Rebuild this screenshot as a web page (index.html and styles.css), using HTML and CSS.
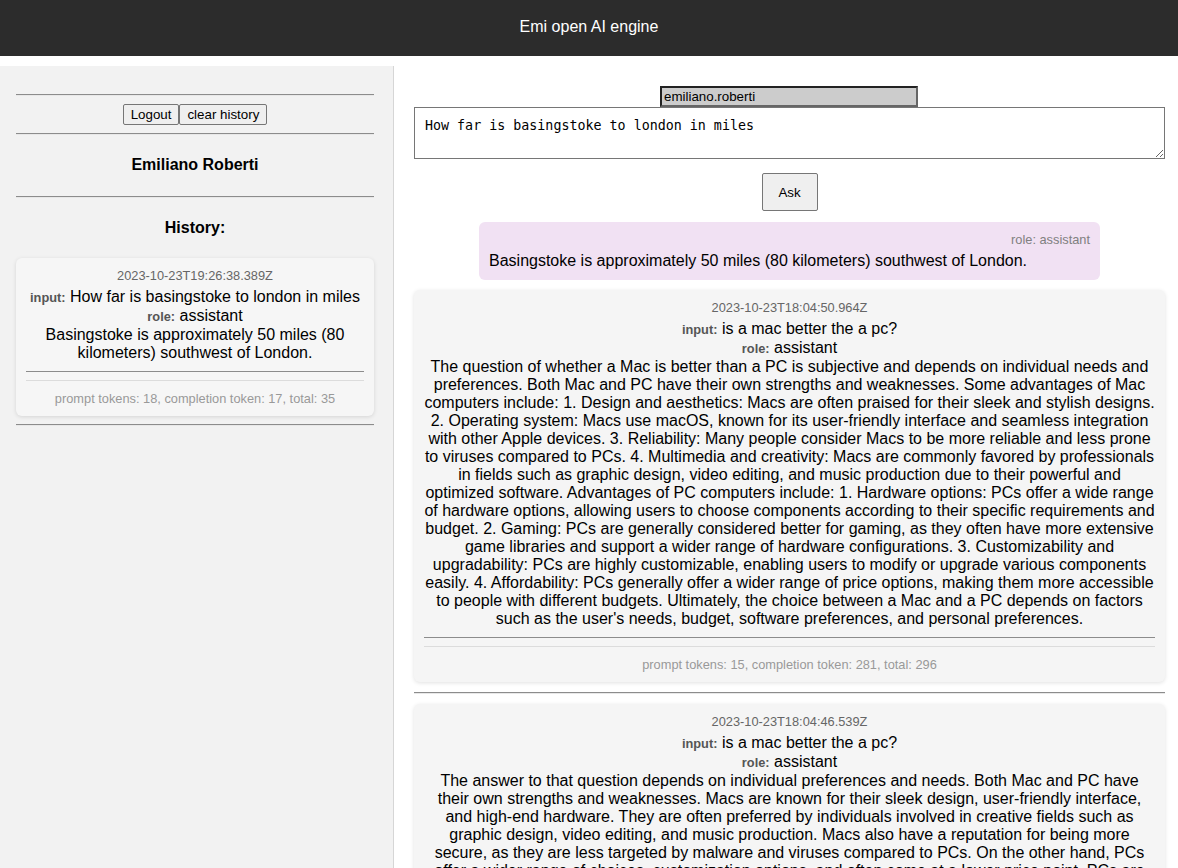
FILE: index.html
```html
<!DOCTYPE html>
<html lang="en">
<head>
<meta charset="utf-8">
<title>Emi open AI engine</title>
<link rel="stylesheet" href="styles.css">
</head>
<body>
<header class="topbar">Emi open AI engine</header>
<div class="layout">
  <aside class="sidebar">
    <hr class="rule">
    <div class="actions">
      <button class="btn">Logout</button><button class="btn">clear history</button>
    </div>
    <hr class="rule">
    <div class="username">Emiliano Roberti</div>
    <hr class="rule">
    <div class="history-title">History:</div>
    <div class="card card-side">
      <div class="date">2023-10-23T19:26:38.389Z</div>
      <div class="line"><span class="label">input:</span> How far is basingstoke to london in miles</div>
      <div class="line"><span class="label">role:</span> assistant</div>
      <div class="line">Basingstoke is approximately 50 miles (80 kilometers) southwest of London.</div>
      <hr class="rule card-rule">
      <div class="tokens">prompt tokens: 18, completion token: 17, total: 35</div>
    </div>
    <hr class="rule">
  </aside>
  <main class="main">
    <div class="user-row"><input class="user-input" type="text" value="emiliano.roberti"></div>
    <textarea class="prompt">How far is basingstoke to london in miles</textarea>
    <div class="ask-row"><button class="ask">Ask</button></div>
    <div class="bubble">
      <div class="bubble-role">role: assistant</div>
      <div class="bubble-text">Basingstoke is approximately 50 miles (80 kilometers) southwest of London.</div>
    </div>
    <div class="card">
      <div class="date">2023-10-23T18:04:50.964Z</div>
      <div class="line"><span class="label">input:</span> is a mac better the a pc?</div>
      <div class="line"><span class="label">role:</span> assistant</div>
      <div class="line">The question of whether a Mac is better than a PC is subjective and depends on individual needs and preferences. Both Mac and PC have their own strengths and weaknesses. Some advantages of Mac computers include: 1. Design and aesthetics: Macs are often praised for their sleek and stylish designs. 2. Operating system: Macs use macOS, known for its user-friendly interface and seamless integration with other Apple devices. 3. Reliability: Many people consider Macs to be more reliable and less prone to viruses compared to PCs. 4. Multimedia and creativity: Macs are commonly favored by professionals in fields such as graphic design, video editing, and music production due to their powerful and optimized software. Advantages of PC computers include: 1. Hardware options: PCs offer a wide range of hardware options, allowing users to choose components according to their specific requirements and budget. 2. Gaming: PCs are generally considered better for gaming, as they often have more extensive game libraries and support a wider range of hardware configurations. 3. Customizability and upgradability: PCs are highly customizable, enabling users to modify or upgrade various components easily. 4. Affordability: PCs generally offer a wider range of price options, making them more accessible to people with different budgets. Ultimately, the choice between a Mac and a PC depends on factors such as the user's needs, budget, software preferences, and personal preferences.</div>
      <hr class="rule card-rule">
      <div class="tokens">prompt tokens: 15, completion token: 281, total: 296</div>
    </div>
    <hr class="rule">
    <div class="card">
      <div class="date">2023-10-23T18:04:46.539Z</div>
      <div class="line"><span class="label">input:</span> is a mac better the a pc?</div>
      <div class="line"><span class="label">role:</span> assistant</div>
      <div class="line">The answer to that question depends on individual preferences and needs. Both Mac and PC have their own strengths and weaknesses. Macs are known for their sleek design, user-friendly interface, and high-end hardware. They are often preferred by individuals involved in creative fields such as graphic design, video editing, and music production. Macs also have a reputation for being more secure, as they are less targeted by malware and viruses compared to PCs. On the other hand, PCs offer a wider range of choices, customization options, and often come at a lower price point. PCs are also more popular for gaming and offer greater compatibility with software and hardware. Ultimately, the choice between a Mac and a PC depends on your specific needs, budget, and personal preferences.</div>
      <hr class="rule card-rule">
      <div class="tokens">prompt tokens: 15, completion token: 152, total: 167</div>
    </div>
    <hr class="rule">
  </main>
</div>
</body>
</html>
```
FILE: styles.css
```css
* { box-sizing: border-box; }
html, body { margin: 0; padding: 0; }
body {
  font-family: "Liberation Sans", Arial, sans-serif;
  font-size: 16px;
  color: #000;
  background: #fff;
}
.topbar {
  height: 56px;
  background: #2c2c2c;
  color: #fff;
  font-size: 16px;
  text-align: center;
  padding-top: 18px;
  line-height: 18px;
}
.layout {
  display: flex;
  align-items: stretch;
  margin-top: 10px;
}
.sidebar {
  width: 394px;
  flex: 0 0 394px;
  background: #f2f2f2;
  border-right: 1px solid #d6d6d6;
  padding: 20px 19px 0 16px;
  min-height: 802px;
}
.rule {
  border: 0;
  border-top: 1px solid #8c8c8c;
  border-bottom: 1px solid #e8e8e8;
  height: 0;
  margin: 8px 0;
}
.actions {
  display: flex;
  justify-content: center;
}
.btn {
  font-family: "Liberation Sans", Arial, sans-serif;
  font-size: 13.33px;
  background: #efefef;
  border: 1px solid #767676;
  border-radius: 2px;
  padding: 1px 7px;
  height: 21px;
  line-height: 15px;
  color: #000;
}
.username, .history-title {
  text-align: center;
  font-weight: bold;
  line-height: 18px;
}
.username { padding: 13px 0 14px; }
.history-title { padding: 13px 0 21px; }
.card {
  background: #f5f5f5;
  border-radius: 6px;
  box-shadow: 0 1px 4px rgba(0,0,0,0.12);
  padding: 10px;
  text-align: center;
  line-height: 18px;
}
.card-side { background: #f6f6f6; margin-bottom: 5px; }
.date {
  font-size: 12.8px;
  color: #666;
  line-height: 15px;
  margin-bottom: 5px;
}
.label {
  font-size: 12.8px;
  font-weight: bold;
  color: #555;
}
.card-rule { margin: 9px 0 8px; border-bottom: 0; }
.tokens {
  border-top: 1px solid #dcdcdc;
  padding-top: 10px;
  font-size: 12.8px;
  color: #999;
  line-height: 15px;
}
.main {
  flex: 1;
  padding: 20px 13px 20px 20px;
  min-width: 0;
}
.user-row {
  display: flex;
  justify-content: center;
  padding-right: 1px;
}
.user-input {
  width: 258px;
  height: 21px;
  background: #cccccc;
  border: 2px solid #666;
  border-top-color: #222;
  border-left-color: #222;
  padding: 1px 2px;
  font-family: "Liberation Sans", Arial, sans-serif;
  font-size: 13.33px;
  color: #000;
  margin: 0;
}
.prompt {
  display: block;
  width: 100%;
  height: 52px;
  border: 1px solid #767676;
  padding: 10px;
  font-family: "DejaVu Sans Mono", monospace;
  font-size: 13.33px;
  line-height: 16px;
  resize: vertical;
  margin: 0;
}
.ask-row {
  display: flex;
  justify-content: center;
  margin-top: 14px;
}
.ask {
  width: 56px;
  height: 38px;
  font-family: "Liberation Sans", Arial, sans-serif;
  font-size: 13.33px;
  background: #efefef;
  border: 1px solid #767676;
  border-radius: 2px;
  color: #000;
}
.bubble {
  width: 621px;
  margin: 11px auto 10px;
  background: #f1e1f3;
  border-radius: 6px;
  padding: 10px;
  text-align: left;
}
.bubble-role {
  text-align: right;
  font-size: 12.8px;
  color: #808080;
  line-height: 15px;
  margin-bottom: 5px;
}
.bubble-text { line-height: 18px; }
.main .card + .rule { margin: 10px 0 10px; }
```
